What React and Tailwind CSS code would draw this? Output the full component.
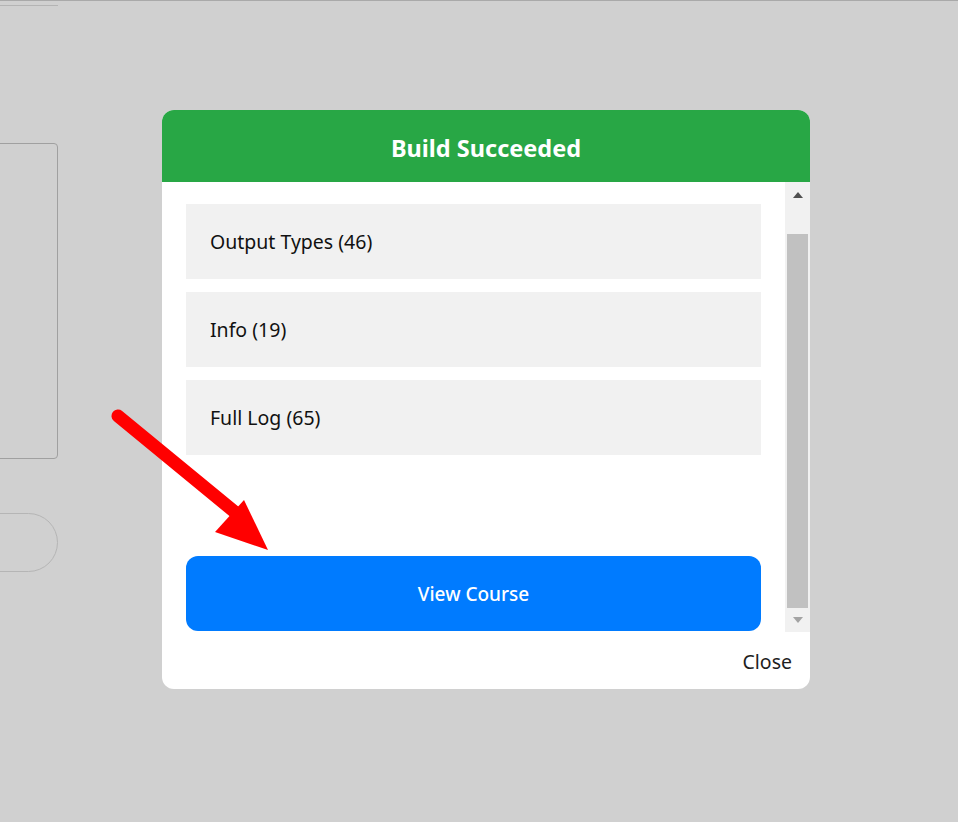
import React from "react";

const items = ["Output Types (46)", "Info (19)", "Full Log (65)"];

function Arrow() {
  return (
    <svg className="absolute left-0 top-0 pointer-events-none" width="958" height="822">
      <line x1="118" y1="415" x2="236" y2="512" stroke="#ff0000" strokeWidth="13" strokeLinecap="round" />
      <polygon points="244,499 215,531 268,549" fill="#ff0000" />
    </svg>
  );
}

function FakeScrollbar() {
  return (
    <div className="w-[25px] shrink-0 bg-[#f1f1f1] flex flex-col items-center">
      <div className="h-[22px] flex items-center justify-center pt-[4px]">
        <div className="w-0 h-0 border-l-[5px] border-r-[5px] border-b-[6px] border-l-transparent border-r-transparent border-b-[#505050]" />
      </div>
      <div className="flex-1 w-full px-[2px] pt-[30px]">
        <div className="h-full bg-[#c1c1c1]" />
      </div>
      <div className="h-[24px] flex items-center justify-center">
        <div className="w-0 h-0 border-l-[5px] border-r-[5px] border-t-[6px] border-l-transparent border-r-transparent border-t-[#a3a3a3]" />
      </div>
    </div>
  );
}

export default function App() {
  return (
    <div className="relative w-[958px] h-[822px] overflow-hidden bg-[#d0d0d0] border-t border-[#a9a9a9] font-['Noto_Sans',sans-serif]">
      {/* page behind the dialog */}
      <div className="flex flex-col w-[70px] -ml-[12px]">
        <div className="h-px bg-[#b4b4b4] mt-[4px]" />
        <div className="h-[316px] mt-[137px] border border-[#a0a0a0] rounded-[4px]" />
        <div className="h-[59px] mt-[54px] border border-[#b5b5b5] rounded-r-[30px]" />
      </div>

      {/* dialog */}
      <div className="absolute left-[162px] top-[109px] w-[648px] h-[579px] bg-white rounded-[12px] overflow-hidden flex flex-col">
        <div className="h-[72px] bg-[#28a745] flex items-center justify-center pt-[5px]">
          <h2 className="text-white text-[23.5px] font-bold">Build Succeeded</h2>
        </div>
        <div className="h-[450px] flex">
          <div className="flex-1 px-[24px] pt-[22px] flex flex-col">
            <div className="flex flex-col gap-[13px]">
              {items.map((t) => (
                <div key={t} className="h-[75px] bg-[#f1f1f1] flex items-center px-[24px] text-[19.5px] text-[#111]">
                  {t}
                </div>
              ))}
            </div>
            <button className="mt-[101px] h-[75px] w-full bg-[#007bff] rounded-[12px] text-white text-[19px] font-medium pt-[2px]">
              View Course
            </button>
          </div>
          <FakeScrollbar />
        </div>
        <div className="flex-1 flex items-center justify-end pr-[18px] pt-[2px]">
          <span className="text-[19.5px] text-[#1e1e1e]">Close</span>
        </div>
      </div>

      <Arrow />
    </div>
  );
}
